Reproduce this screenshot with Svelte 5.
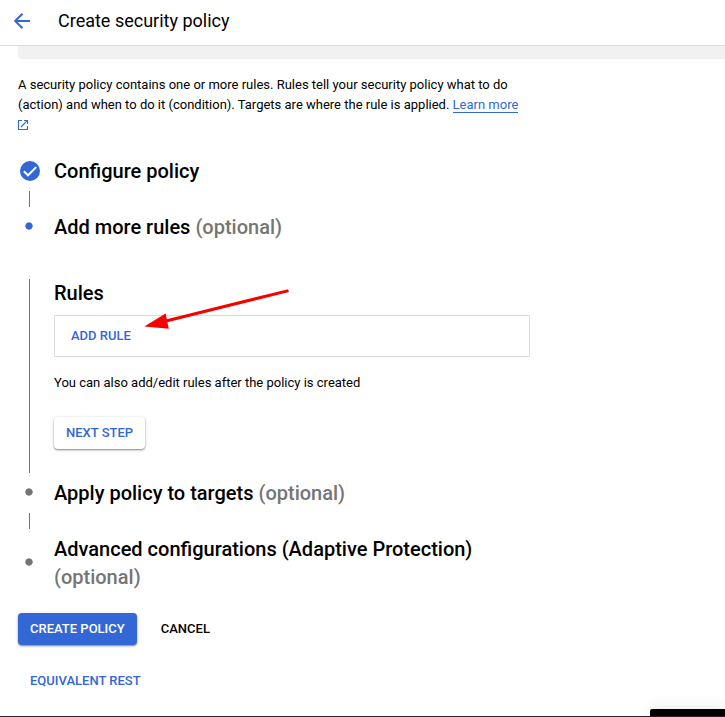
<script>
  const intro =
    'A security policy contains one or more rules. Rules tell your security policy what to do (action) and when to do it (condition). Targets are where the rule is applied.';
</script>

<div class="page">
  <header>
    <svg class="back" width="24" height="24" viewBox="0 0 24 24" fill="none" stroke="#3367d6" stroke-width="2">
      <path d="M20 12H5.500M12.500 4.700 5.200 12l7.300 7.300" />
    </svg>
    <h1>Create security policy</h1>
  </header>
  <div class="banner"></div>

  <main>
    <p class="intro">
      {intro} <a href="#learn">Learn more</a>
      <svg class="ext" width="10" height="10" viewBox="0 0 10 10" fill="none" stroke="#3367d6">
        <path d="M4 .5H.5v9h9V6M6 .5h3.500V4M9.300 .7 3 7" stroke-width="1.150" />
      </svg>
    </p>

    <div class="step">
      <span class="marker">
        <svg width="20" height="20" viewBox="0 0 20 20">
          <circle cx="10" cy="10" r="10" fill="#3367d6" />
          <path d="M3.800 10.200 8 14.300l8.200-8.200" fill="none" stroke="#fff" stroke-width="2" />
        </svg>
      </span>
      <h2>Configure policy</h2>
    </div>
    <div class="line"></div>
    <div class="step">
      <span class="marker"><i class="dot active"></i></span>
      <h2>Add more rules <span>(optional)</span></h2>
    </div>

    <section class="content">
      <h2>Rules</h2>
      <div class="rules"><button class="text">ADD RULE</button></div>
      <p>You can also add/edit rules after the policy is created</p>
      <button class="raised">NEXT STEP</button>
      <svg class="arrow" width="148" height="42" viewBox="0 0 148 42">
        <path d="M20 33.700 145.500 2.600" stroke="#f80000" stroke-width="3" />
        <path d="M1.300 38.600 22.600 25.500l3.200 15.200z" fill="#f80000" />
      </svg>
    </section>

    <div class="step">
      <span class="marker"><i class="dot"></i></span>
      <h2>Apply policy to targets <span>(optional)</span></h2>
    </div>
    <div class="line"></div>
    <div class="step">
      <span class="marker"><i class="dot"></i></span>
      <h2>Advanced configurations (Adaptive Protection) <span>(optional)</span></h2>
    </div>

    <div class="actions">
      <button class="primary">CREATE POLICY</button>
      <button class="text dark">CANCEL</button>
    </div>
    <button class="text rest">EQUIVALENT REST</button>
  </main>
  <div class="toast"></div>
</div>

<style>
  .page {
    position: relative;
    box-sizing: border-box;
    height: 717px;
    overflow: hidden;
    background: #fff;
    border-bottom: 1px solid #23252e;
    font-family: Roboto, 'Liberation Sans', sans-serif;
    font-size: 13px;
    line-height: 20px;
    color: #000;
  }
  header {
    display: flex;
    align-items: center;
    box-sizing: border-box;
    height: 46px;
    padding: 0 0 4px 10px;
    border-bottom: 1px solid #dcdcdc;
  }
  h1 {
    margin: 0 0 0 24px;
    font-size: 18px;
    font-weight: 400;
    line-height: 24px;
  }
  .banner {
    height: 13px;
    margin-left: 18px;
    background: #f1f1f1;
    border-radius: 0 0 0 4px;
  }
  main {
    width: 512px;
    padding: 16px 0 0 18px;
  }
  p {
    margin: 0;
  }
  .intro {
    width: 504px;
    margin-bottom: 27px;
  }
  a {
    color: #3367d6;
    text-decoration: none;
    box-shadow: 0 1px #3367d6;
  }
  .ext {
    display: block;
    margin-top: 5px;
  }
  .step {
    display: flex;
    align-items: center;
  }
  .marker {
    display: flex;
    flex: none;
    justify-content: center;
    width: 24px;
    margin-right: 12px;
  }
  h2 {
    margin: 0;
    font-size: 20px;
    font-weight: 500;
    line-height: 28px;
  }
  h2 span {
    color: #757575;
  }
  .dot {
    width: 8px;
    height: 8px;
    margin: 0 2px 2px 0;
    border-radius: 50%;
    background: radial-gradient(circle, #757575 3.300px, transparent 4.100px);
  }
  .dot.active {
    background: radial-gradient(circle, #3367d6 3.300px, transparent 4.100px);
  }
  .line {
    width: 1px;
    height: 16px;
    margin: 6px 0 6px 11px;
    background: #757575;
  }
  .content {
    position: relative;
    box-sizing: border-box;
    height: 194px;
    margin: 38px 0 6px 11px;
    padding-left: 24px;
    border-left: 1px solid #757575;
  }
  .rules {
    display: flex;
    align-items: center;
    box-sizing: border-box;
    height: 42px;
    margin: 8px 0 16px;
    padding-left: 4px;
    border: 1px solid #dcdcdc;
  }
  button {
    height: 32px;
    padding: 0 12px;
    border: 0;
    border-radius: 4px;
    background: #fff;
    font: 500 13px/32px Roboto, 'Liberation Sans', sans-serif;
    color: #3367d6;
    white-space: nowrap;
  }
  .raised {
    display: block;
    margin-top: 24px;
    box-shadow: 0 1px 3px rgba(0, 0, 0, 0.35), 0 1px 1px rgba(0, 0, 0, 0.2);
  }
  .arrow {
    position: absolute;
    left: 113px;
    top: 9px;
  }
  .actions {
    display: flex;
    gap: 12px;
    margin-top: 22px;
  }
  .primary {
    background: #3367d6;
    color: #fff;
    box-shadow: 0 1px 3px rgba(0, 0, 0, 0.35), 0 1px 1px rgba(0, 0, 0, 0.2);
  }
  .dark {
    color: #000;
  }
  .rest {
    margin-top: 20px;
  }
  .toast {
    position: absolute;
    right: 0;
    bottom: 0;
    width: 75px;
    height: 7px;
    background: #000;
    border-radius: 2px 0 0 0;
    box-shadow: 0 0 14px rgba(0, 0, 0, 0.14);
  }
</style>
